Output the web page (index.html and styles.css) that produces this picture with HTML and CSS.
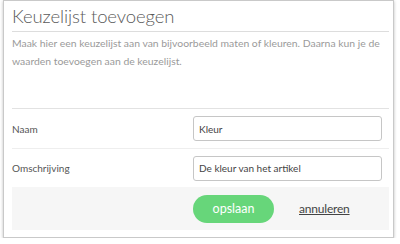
FILE: index.html
```html
<!DOCTYPE html>
<html lang="nl">
<head>
<meta charset="utf-8">
<title>Keuzelijst toevoegen</title>
<link rel="stylesheet" href="styles.css">
</head>
<body>
<div class="dialog">
  <h1 class="title">Keuzelijst toevoegen</h1>
  <p class="desc">Maak hier een keuzelijst aan van bijvoorbeeld maten of kleuren. Daarna kun je de waarden toevoegen aan de keuzelijst.</p>
  <div class="form">
    <div class="row">
      <label class="label" for="naam">Naam</label>
      <input class="input" id="naam" type="text" value="Kleur">
    </div>
    <div class="row">
      <label class="label" for="oms">Omschrijving</label>
      <input class="input" id="oms" type="text" value="De kleur van het artikel">
    </div>
    <div class="footer">
      <button class="btn" type="button">opslaan</button>
      <a class="cancel" href="#">annuleren</a>
    </div>
  </div>
</div>
</body>
</html>
```

FILE: styles.css
```css
* { box-sizing: border-box; }
html, body { margin: 0; padding: 0; background: #fff; }
body { font-family: Lato, "Liberation Sans", sans-serif; }
.dialog {
  margin-left: 3px;
  width: 391px;
  height: 238px;
  border: 1px solid #c9c9c9;
  box-shadow: 0 1px 3px rgba(0,0,0,0.25);
  padding: 0 4px 0 8px;
  display: flex;
  flex-direction: column;
}
.title {
  margin: 0;
  height: 31px;
  border-bottom: 1px solid #ddd;
  font-weight: 300;
  font-size: 18.5px;
  line-height: 30px;
  color: #5a5a5a;
  letter-spacing: -0.1px;
}
.desc {
  margin: 0;
  padding-top: 2px;
  height: 77px;
  font-size: 10.4px;
  line-height: 18px;
  color: #9a9a9a;
  border-bottom: 1px solid #e2e2e2;
}
.row {
  display: grid;
  grid-template-columns: 181px 1fr;
  align-items: center;
  height: 40px;
  padding: 0 7px 0 0;
  border-bottom: 1px solid #eee;
}
.row + .row { height: 38px; border-bottom: 0; }
.label { font-size: 10px; color: #555; }
.input {
  height: 25px;
  border: 1px solid #c6c6c6;
  border-radius: 3px;
  padding: 0 5px;
  font-family: Lato, "Liberation Sans", sans-serif;
  font-size: 10px;
  color: #444;
  outline: none;
}
.footer {
  background: #f6f6f6;
  height: 43px;
  display: flex;
  align-items: center;
  padding-left: 181px;
}
.btn {
  width: 81px;
  height: 28px;
  border: 0;
  border-radius: 14px;
  background: #67d67a;
  color: #fff;
  font-family: Lato, "Liberation Sans", sans-serif;
  font-size: 12.5px;
  cursor: pointer;
}
.cancel {
  margin-left: 25px;
  font-size: 12px;
  letter-spacing: -0.2px;
  color: #444;
  text-decoration: underline;
}
```
